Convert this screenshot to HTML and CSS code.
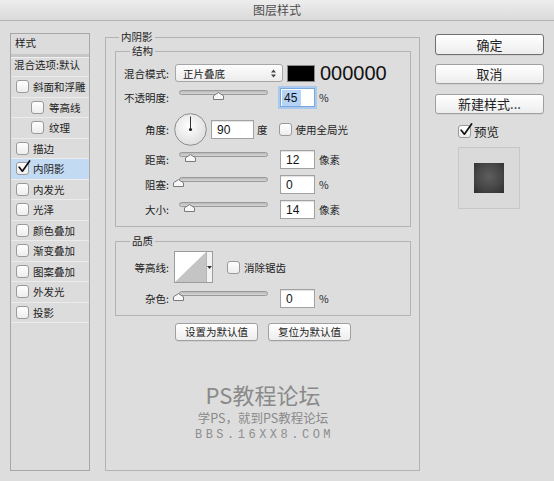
FILE: index.html
```html
<!DOCTYPE html>
<html lang="zh-CN">
<head>
<meta charset="utf-8">
<title>图层样式</title>
<link rel="stylesheet" href="styles.css">
</head>
<body>
<div class="window">
  <div class="titlebar">图层样式</div>
  <div class="main">
    <div class="sidebar">
      <div class="side-head">样式</div>
      <div class="side-blend">混合选项:默认</div>
      <div class="side-item"><span class="cb"></span><span>斜面和浮雕</span></div>
      <div class="side-item sub"><span class="cb"></span><span>等高线</span></div>
      <div class="side-item sub"><span class="cb"></span><span>纹理</span></div>
      <div class="side-item"><span class="cb"></span><span>描边</span></div>
      <div class="side-item selected"><span class="cb checked"><svg class="tick" viewBox="0 0 14 14" width="14" height="14"><path d="M2.2 7.2 L5.4 11.2 L12.6 1" fill="none" stroke="#111" stroke-width="1.7" stroke-linecap="round" stroke-linejoin="round"/></svg></span><span>内阴影</span></div>
      <div class="side-item"><span class="cb"></span><span>内发光</span></div>
      <div class="side-item"><span class="cb"></span><span>光泽</span></div>
      <div class="side-item"><span class="cb"></span><span>颜色叠加</span></div>
      <div class="side-item"><span class="cb"></span><span>渐变叠加</span></div>
      <div class="side-item"><span class="cb"></span><span>图案叠加</span></div>
      <div class="side-item"><span class="cb"></span><span>外发光</span></div>
      <div class="side-item"><span class="cb"></span><span>投影</span></div>
    </div>

    <div class="center">
      <fieldset class="group outer">
        <legend>内阴影</legend>

        <fieldset class="group inner structure">
          <legend class="sub-legend">结构</legend>

          <div class="row r1">
            <span class="lbl">混合模式:</span>
            <div class="select"><span>正片叠底</span>
              <svg class="updown" viewBox="0 0 5 9" width="5" height="9"><path d="M0 3.5 L2.5 0.5 L5 3.5 Z M0 5.5 L2.5 8.5 L5 5.5 Z" fill="#444"/></svg>
            </div>
            <span class="swatch"></span>
            <span class="hex">000000</span>
          </div>

          <div class="row r2">
            <span class="lbl">不透明度:</span>
            <div class="slider"><div class="track"></div>
              <svg class="thumb" style="left:34px" viewBox="0 0 11 8" width="11" height="8"><path d="M0.5 7.5 V3.8 L5.5 0.6 L10.5 3.8 V7.5 Z" fill="#f7f7f7" stroke="#7a7a7a"/></svg>
            </div>
            <span class="field focused"><span class="sel">45</span></span>
            <span class="unit">%</span>
          </div>

          <div class="row r3">
            <span class="lbl">角度:</span>
            <svg class="dial" viewBox="0 0 33 33" width="33" height="33">
              <defs><radialGradient id="dg" cx="45%" cy="40%" r="65%"><stop offset="0" stop-color="#ffffff"/><stop offset="1" stop-color="#dcdcdc"/></radialGradient></defs>
              <circle cx="16.5" cy="16.5" r="15.8" fill="url(#dg)" stroke="#8d8d8d" stroke-width="1"/>
              <line x1="16.5" y1="16.5" x2="16.5" y2="3.5" stroke="#333" stroke-width="1"/>
              <circle cx="16.5" cy="16.5" r="1.6" fill="#222"/>
            </svg>
            <span class="field wide">90</span>
            <span class="unit deg">度</span>
            <span class="cb inline-cb"></span>
            <span class="cb-label">使用全局光</span>
          </div>

          <div class="row r4">
            <span class="lbl">距离:</span>
            <div class="slider"><div class="track"></div>
              <svg class="thumb" style="left:6px" viewBox="0 0 11 8" width="11" height="8"><path d="M0.5 7.5 V3.8 L5.5 0.6 L10.5 3.8 V7.5 Z" fill="#f7f7f7" stroke="#7a7a7a"/></svg>
            </div>
            <span class="field">12</span>
            <span class="unit">像素</span>
          </div>

          <div class="row r5">
            <span class="lbl">阻塞:</span>
            <div class="slider"><div class="track"></div>
              <svg class="thumb" style="left:-6px" viewBox="0 0 11 8" width="11" height="8"><path d="M0.5 7.5 V3.8 L5.5 0.6 L10.5 3.8 V7.5 Z" fill="#f7f7f7" stroke="#7a7a7a"/></svg>
            </div>
            <span class="field">0</span>
            <span class="unit">%</span>
          </div>

          <div class="row r6">
            <span class="lbl">大小:</span>
            <div class="slider"><div class="track"></div>
              <svg class="thumb" style="left:5px" viewBox="0 0 11 8" width="11" height="8"><path d="M0.5 7.5 V3.8 L5.5 0.6 L10.5 3.8 V7.5 Z" fill="#f7f7f7" stroke="#7a7a7a"/></svg>
            </div>
            <span class="field">14</span>
            <span class="unit">像素</span>
          </div>
        </fieldset>

        <fieldset class="group inner quality">
          <legend class="sub-legend">品质</legend>
          <div class="row q1">
            <span class="lbl">等高线:</span>
            <div class="contour">
              <svg class="contour-img" viewBox="0 0 31 30" width="31" height="30"><rect width="31" height="30" fill="#fff"/><path d="M0 30 L31 0 L31 30 Z" fill="#c4c4c4"/></svg>
              <div class="contour-drop"><svg viewBox="0 0 5 3" width="5" height="3"><path d="M0 0 H5 L2.5 3 Z" fill="#333"/></svg></div>
            </div>
            <span class="cb inline-cb aa"></span>
            <span class="cb-label">消除锯齿</span>
          </div>
          <div class="row q2">
            <span class="lbl">杂色:</span>
            <div class="slider"><div class="track"></div>
              <svg class="thumb" style="left:-6px" viewBox="0 0 11 8" width="11" height="8"><path d="M0.5 7.5 V3.8 L5.5 0.6 L10.5 3.8 V7.5 Z" fill="#f7f7f7" stroke="#7a7a7a"/></svg>
            </div>
            <span class="field">0</span>
            <span class="unit">%</span>
          </div>
        </fieldset>

        <div class="defaults">
          <button class="btn small">设置为默认值</button>
          <button class="btn small">复位为默认值</button>
        </div>

        <div class="watermark">
          <div class="wm1">PS教程论坛</div>
          <div class="wm2">学PS，就到PS教程论坛</div>
          <div class="wm3">BBS.16XX8.COM</div>
        </div>
      </fieldset>
    </div>

    <div class="right">
      <button class="btn big default">确定</button>
      <button class="btn big">取消</button>
      <button class="btn big">新建样式...</button>
      <div class="preview-check">
        <span class="cb checked"><svg class="tick" viewBox="0 0 14 14" width="14" height="14"><path d="M2.2 7.2 L5.4 11.2 L12.6 1" fill="none" stroke="#111" stroke-width="1.7" stroke-linecap="round" stroke-linejoin="round"/></svg></span>
        <span class="cb-label">预览</span>
      </div>
      <div class="preview-box"><div class="preview-square"></div></div>
    </div>
  </div>
</div>
</body>
</html>
```

FILE: styles.css
```css
* { box-sizing: border-box; }

html, body {
  margin: 0;
  padding: 0;
}

body {
  width: 554px;
  height: 481px;
  overflow: hidden;
  background: #dddddd;
  font-family: "Noto Sans CJK SC", "Liberation Sans", sans-serif;
  font-size: 10.5px;
  color: #222;
}

.window {
  width: 554px;
  height: 481px;
}

.titlebar {
  height: 21px;
  border-bottom: 1px solid #b4b4b4;
  background: linear-gradient(#ededed, #dadada);
  text-align: center;
  line-height: 20px;
  font-size: 12px;
  color: #4d4d4d;
}

.main {
  display: flex;
  align-items: flex-start;
  padding: 9px 0 0 10px;
}

/* ---------- sidebar ---------- */
.sidebar {
  width: 80px;
  height: 438px;
  margin-top: 3px;
  border: 1px solid #a8a8a8;
  background: #dcdcdc;
}

.side-head {
  height: 23px;
  padding-left: 4px;
  line-height: 18px;
  border-bottom: 3px solid #c6c6c6;
  box-shadow: 0 1px 0 #efefef;
}

.side-blend {
  height: 20px;
  padding-left: 3px;
  padding-top: 1px;
  line-height: 14px;
  border-bottom: 1px solid #ececec;
}

.side-item {
  display: flex;
  align-items: center;
  height: 20.5px;
  padding-left: 5px;
  border-bottom: 1px solid #ececec;
}

.side-item.sub {
  padding-left: 20px;
}

.side-item.sub .cb {
  margin-right: 5px;
}

.side-item.selected {
  background: #c3daf3;
}

.cb {
  position: relative;
  display: inline-block;
  flex: none;
  width: 13px;
  height: 13px;
  margin-right: 4px;
  border: 1px solid #9a9a9a;
  border-radius: 3px;
  background: linear-gradient(#ffffff, #ededed);
}

.tick {
  position: absolute;
  left: 0px;
  top: -3px;
}

/* ---------- center ---------- */
.center {
  width: 315px;
  margin-left: 15px;
}

.group {
  margin: 0;
  min-width: 0;
  border: 1px solid #b3b3b3;
}

.group legend {
  padding: 0 2px;
  line-height: 14px;
  font-size: 10.5px;
}

.outer {
  height: 441px;
  padding: 0 8px 0 9px;
}

.outer > legend {
  margin-left: 4px;
}

.inner {
  padding: 6px 0 7px 0;
}

.sub-legend {
  margin-left: 14px;
}

.quality {
  margin-top: 7px;
  padding: 3px 0 7px 0;
}

.row {
  display: flex;
  align-items: center;
  height: 19px;
}

.lbl {
  width: 53px;
  flex: none;
  text-align: right;
}

.r1 { height: 18px; }
.r2 { margin-top: 6px; }
.r3 { margin-top: 6px; height: 33px; }
.r4 { margin-top: 4px; }
.r5 { margin-top: 6px; }
.r6 { margin-top: 6px; }
.q1 { height: 32px; }
.q2 { margin-top: 6px; }

.select {
  display: flex;
  align-items: center;
  justify-content: space-between;
  width: 108px;
  height: 18px;
  margin-left: 6px;
  padding: 0 6px 0 7px;
  border: 1px solid #a6a6a6;
  border-radius: 3px;
  background: linear-gradient(#fdfdfd, #ececec);
}

.swatch {
  width: 28px;
  height: 17px;
  margin-left: 4px;
  background: #000;
  border: 1px solid #8a8a8a;
}

.hex {
  margin-left: 5px;
  font-family: "Liberation Sans", sans-serif;
  font-size: 20px;
  line-height: 18px;
  color: #111;
}

.slider {
  position: relative;
  align-self: flex-start;
  width: 89px;
  height: 19px;
  margin-left: 10px;
  flex: none;
}

.track {
  height: 5px;
  margin-top: 2px;
  border: 1px solid #999;
  border-radius: 3px;
  background: linear-gradient(#b9b9b9, #d6d6d6);
}

.thumb {
  position: absolute;
  top: 4px;
}

.field {
  display: flex;
  align-items: center;
  width: 35px;
  height: 19px;
  margin-left: 12px;
  padding-left: 5px;
  border: 1px solid #a2a2a2;
  background: #fff;
  box-shadow: inset 0 1px 1px rgba(0,0,0,0.12);
  font-family: "Liberation Sans", sans-serif;
  font-size: 12px;
  color: #111;
}

.field.focused {
  border-color: #7aa7dc;
  box-shadow: 0 0 0 2px #a9c9ef;
  padding-left: 1px;
}

.sel {
  background: #b4d3f7;
  padding: 1px 4px 1px 2px;
}

.field.wide {
  width: 43px;
  margin-left: 4px;
}

.dial {
  margin-left: 5px;
  flex: none;
}

.unit {
  margin-left: 4px;
}

.unit.deg {
  margin-left: 3px;
}

.inline-cb {
  margin-left: 11px;
}

.inline-cb.aa {
  margin-left: 14px;
}

.contour {
  display: flex;
  width: 39px;
  height: 32px;
  margin-left: 5px;
  border: 1px solid #9c9c9c;
  background: #fff;
}

.contour-img {
  flex: none;
}

.contour-drop {
  display: flex;
  align-items: center;
  justify-content: center;
  width: 6px;
  border-left: 1px solid #b5b5b5;
  background: #f2f2f2;
}

.defaults {
  display: flex;
  justify-content: center;
  gap: 10px;
  margin-top: 7px;
}

.btn {
  font-family: "Noto Sans CJK SC", "Liberation Sans", sans-serif;
  color: #222;
  border: 1px solid #a0a0a0;
  border-radius: 3px;
  background: linear-gradient(#ffffff, #ededed);
  padding: 0;
  box-shadow: 0 1px 0 rgba(0,0,0,0.05);
}

.btn.small {
  width: 83px;
  height: 18px;
  font-size: 10.5px;
  line-height: 14px;
}

.watermark {
  margin-top: 39px;
  text-align: center;
  color: #8a8a8a;
}

.wm1 {
  font-size: 22px;
  line-height: 28px;
}

.wm2 {
  font-size: 12.5px;
  line-height: 17px;
  margin-top: 1px;
}

.wm3 {
  font-family: "Liberation Mono", monospace;
  font-size: 12px;
  line-height: 14px;
  letter-spacing: 3.5px;
  padding-left: 3px;
  margin-top: 2px;
  color: #8e8e8e;
}

/* ---------- right column ---------- */
.right {
  display: flex;
  flex-direction: column;
  width: 109px;
  margin-left: 15px;
  margin-top: 4px;
}

.btn.big {
  width: 109px;
  height: 20px;
  font-size: 13px;
  line-height: 16px;
  margin-top: 10px;
}

.btn.big.default {
  height: 21px;
  margin-top: 0;
  border-color: #6f6f6f;
}

.btn.big.default + .btn.big {
  margin-top: 9px;
}

.preview-check {
  display: flex;
  align-items: center;
  margin-top: 11px;
  margin-left: 23px;
  height: 13px;
  font-size: 12.5px;
}

.preview-check .cb {
  margin-right: 3px;
}

.preview-box {
  display: flex;
  align-items: center;
  justify-content: center;
  width: 62px;
  height: 62px;
  margin-top: 9px;
  margin-left: 23px;
  border: 1px solid #c7c7c7;
  background: #dadada;
}

.preview-square {
  width: 30px;
  height: 30px;
  background: radial-gradient(circle at 50% 45%, #5e5e5e 0%, #474747 55%, #2e2e2e 100%);
}
```
